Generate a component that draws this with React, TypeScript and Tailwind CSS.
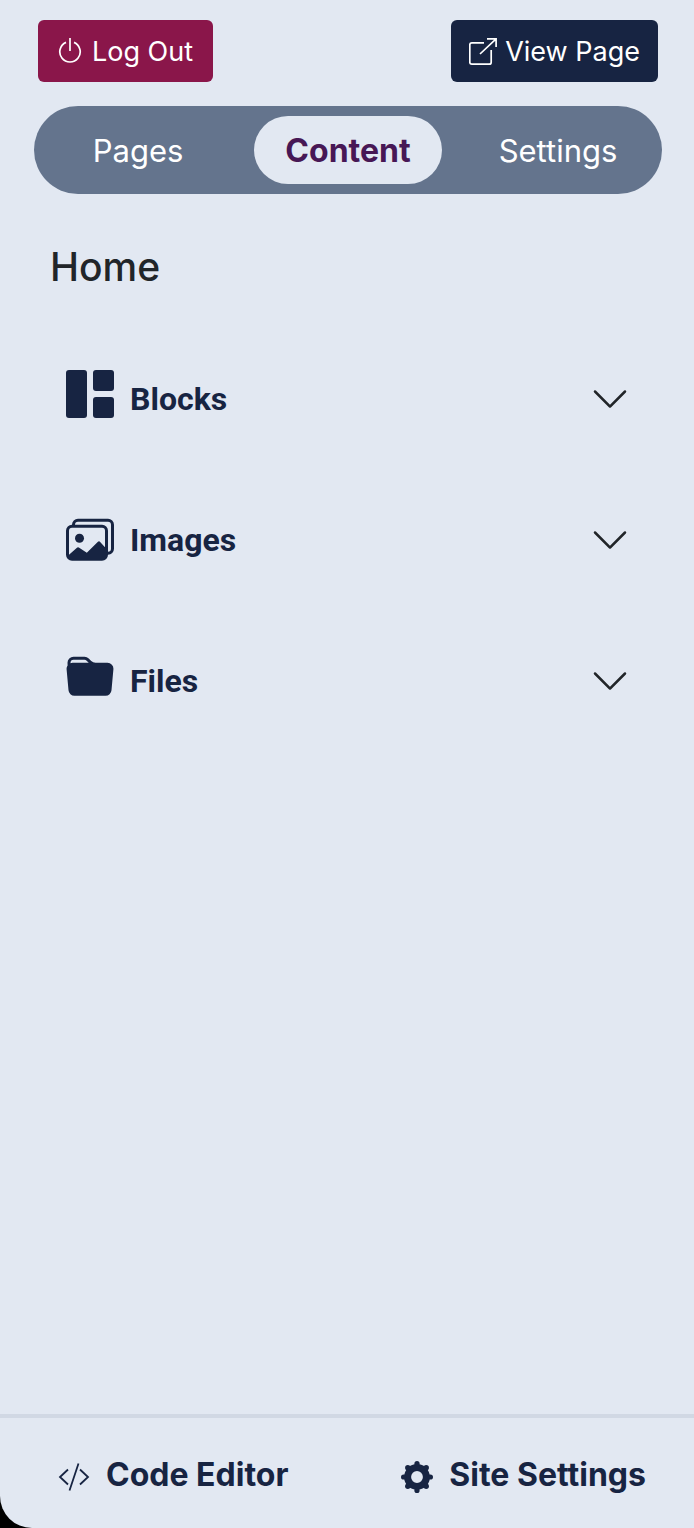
import React, { useState } from 'react';
import { BsChevronDown, BsFolderFill, BsImages } from 'react-icons/bs';

const tabs = ['Pages', 'Content', 'Settings'];

const PowerIcon = () => (
  <svg viewBox="0 0 24 28" className="h-7 w-6" fill="none" stroke="currentColor" strokeWidth="1.7" aria-hidden="true">
    <path d="M12 0v13M8 4.4a10.2 10.2 0 1 0 8 0" />
  </svg>
);

const ExternalIcon = () => (
  <svg viewBox="0 0 28 28" className="size-7" fill="none" stroke="currentColor" strokeWidth="1.7" aria-hidden="true">
    <path d="M15 4.8H2.8a2 2 0 0 0-2 2v17.4a2 2 0 0 0 2 2h17.4a2 2 0 0 0 2-2V12" />
    <path d="M18 .9h9.1V9M27.1.9 11 16" />
  </svg>
);

const BlocksIcon = () => (
  <svg viewBox="0 0 48 48" className="size-12" fill="currentColor" aria-hidden="true">
    <rect width="21" height="48" rx="3" />
    <rect x="27" width="21" height="21" rx="3" />
    <rect x="27" y="27" width="21" height="21" rx="3" />
  </svg>
);

const CodeIcon = () => (
  <svg viewBox="0 0 32 32" className="mt-1 size-8" fill="none" stroke="currentColor" strokeWidth="1.8" aria-hidden="true">
    <path d="M10 8.5 2 16l8 7.5M22 8.5l8 7.5-8 7.5M20.5 2.5l-9 27" />
  </svg>
);

const GearIcon = () => (
  <svg viewBox="0 0 32 32" className="mt-1 size-8" fill="currentColor" aria-hidden="true">
    <circle cx="16" cy="16" r="9.4" fill="none" stroke="currentColor" strokeWidth="7" />
    <circle cx="16" cy="2.6" r="2.6" />
    <circle cx="16" cy="29.4" r="2.6" />
    <circle cx="2.6" cy="16" r="2.6" />
    <circle cx="29.4" cy="16" r="2.6" />
    <circle cx="6.8" cy="6.8" r="2.7" />
    <circle cx="25.2" cy="6.8" r="2.7" />
    <circle cx="6.8" cy="25.2" r="2.7" />
    <circle cx="25.2" cy="25.2" r="2.7" />
  </svg>
);

const sections = [
  { id: 'blocks', title: 'Blocks', icon: <BlocksIcon /> },
  { id: 'images', title: 'Images', icon: <BsImages className="size-12 overflow-visible" viewBox="0 -1.6 16 16" /> },
  { id: 'files', title: 'Files', icon: <BsFolderFill className="size-12" viewBox="0 -0.6 16 16" /> },
];

const App = () => {
  const [activeTab, setActiveTab] = useState('Content');

  return (
    <div className="min-h-screen bg-black font-['Inter',sans-serif]">
      <div className="flex min-h-screen flex-col rounded-bl-[32px] bg-[#e2e8f2] text-[#172442]">
        <header className="flex items-center justify-between pt-5 pr-9 pl-[38px]">
          <button className="flex h-[62px] items-center gap-2.5 rounded-md bg-[#8a164a] px-5 pt-0.5 text-[27px] text-white">
            <PowerIcon />
            Log Out
          </button>
          <a href="#page" className="flex h-[62px] items-center gap-2 rounded-md bg-[#172442] px-[18px] pt-0.5 text-[27px] text-white">
            <ExternalIcon />
            View Page
          </a>
        </header>

        <nav className="mt-6 mr-8 ml-[34px] grid h-[88px] grid-cols-3 gap-[22px] rounded-full bg-[#64748d] p-2.5">
          {tabs.map((tab) => (
            <button
              key={tab}
              className={
                tab === activeTab
                  ? 'rounded-full bg-[#e2e8f2] pt-0.5 text-[32px] font-bold text-[#471755]'
                  : 'rounded-full pt-0.5 text-[31px] text-white'
              }
              onClick={() => setActiveTab(tab)}
            >
              {tab}
            </button>
          ))}
        </nav>

        <main className="flex-1 pr-8 pl-[34px]">
          <h1 className="mt-[49px] pl-4 text-[39px] leading-12 font-medium text-[#212529]">Home</h1>
          <div className="mt-[79px] flex flex-col gap-[83px]">
            {sections.map((section) => (
              <button key={section.id} className="flex h-[58px] items-center px-8 text-left">
                <span className="self-start">{section.icon}</span>
                <span className="ml-4 flex-1 font-['Roboto',sans-serif] text-[32px] font-bold">{section.title}</span>
                <BsChevronDown className="size-10 text-[#212529]" />
              </button>
            ))}
          </div>
        </main>

        <footer className="flex h-[114px] items-center justify-between border-t-4 border-[#d1d8e4] pt-1 pr-12 pl-[58px] text-[32px] font-bold">
          <a href="#code" className="flex items-center gap-4">
            <CodeIcon />
            Code Editor
          </a>
          <a href="#settings" className="flex items-center gap-4">
            <GearIcon />
            Site Settings
          </a>
        </footer>
      </div>
    </div>
  );
};

export default App;
